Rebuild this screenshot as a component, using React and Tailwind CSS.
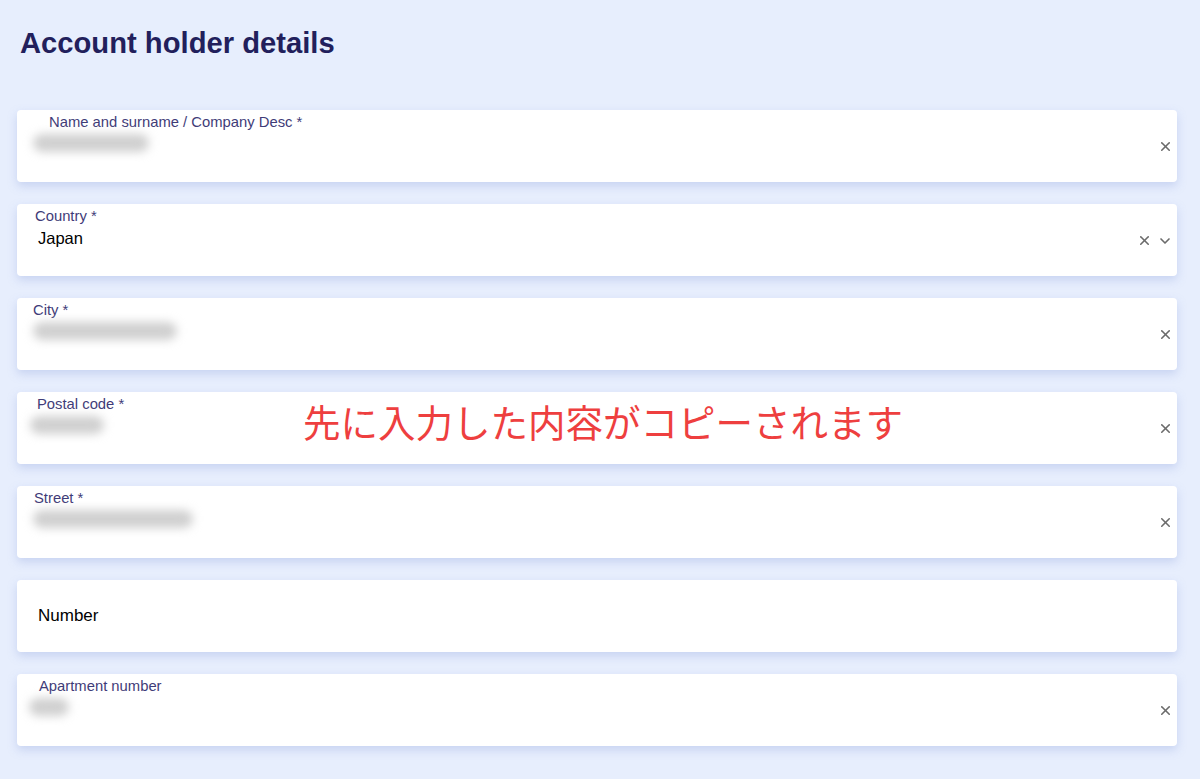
import { X, ChevronDown } from 'lucide-react';

const FIELDS = [
    { label: 'Name and surname / Company Desc *', labelPad: 'pl-8', blur: 'w-[116px]', blurPad: 'pl-[16px]' },
    { label: 'Country *', labelPad: 'pl-[18px]', value: 'Japan', select: true },
    { label: 'City *', labelPad: 'pl-4', blur: 'w-[144px]', blurPad: 'pl-[16px]' },
    { label: 'Postal code *', labelPad: 'pl-5', blur: 'w-[74px]', blurPad: 'pl-[13px]' },
    { label: 'Street *', labelPad: 'pl-[17px]', blur: 'w-[160px]', blurPad: 'pl-[16px]' },
    { placeholder: 'Number' },
    { label: 'Apartment number', labelPad: 'pl-[22px]', blur: 'w-[40px]', blurPad: 'pl-[12px]' },
];

function Field({ field }) {
    return (
        <div className="relative flex h-[72px] items-center rounded-[4px] bg-white shadow-[0_4px_10px_rgba(140,160,220,0.35)]">
            {field.placeholder ? (
                <span className="pl-[21px] text-[17px] text-black">{field.placeholder}</span>
            ) : (
                <div className="flex h-full flex-1 flex-col pt-[3px]">
                    <span className={`${field.labelPad} text-[14.8px] leading-[18px] text-[#3f3c78]`}>
                        {field.label}
                    </span>
                    {field.value ? (
                        <span className="pl-[21px] pt-[3px] text-[16.5px] leading-[20px] text-black">
                            {field.value}
                        </span>
                    ) : (
                        <div className={`${field.blurPad} pt-[3px]`}>
                            <div className={`${field.blur} h-[18px] rounded-full bg-[#d0d0d0] blur-[5px]`} />
                        </div>
                    )}
                </div>
            )}
            {!field.placeholder && (
                <div className="ml-auto flex items-center gap-[5px] pr-[4px] pt-[1px] text-[#6b6b6b]">
                    <X size={15} strokeWidth={2.5} />
                    {field.select && <ChevronDown size={16} strokeWidth={2.5} />}
                </div>
            )}
        </div>
    );
}

export default function App() {
    return (
        <div className="relative min-h-[779px] w-full bg-[#e7eefd] font-['Liberation_Sans',Arial,sans-serif]">
            <div className="pl-[17px] pr-[23px]">
                <h1 className="pl-[3px] pt-[26px] text-[29.2px] font-bold leading-[34px] text-[#221f5c]">
                    Account holder details
                </h1>
                <div className="mt-[50px] flex flex-col gap-[22px]">
                    {FIELDS.map((f, i) => (
                        <Field key={i} field={f} />
                    ))}
                </div>
            </div>
            <p className="absolute left-[303px] top-[398px] font-['Noto_Sans_CJK_JP',sans-serif] text-[37.5px] leading-[46px] text-[#ee3f3f]">
                先に入力した内容がコピーされます
            </p>
        </div>
    );
}
